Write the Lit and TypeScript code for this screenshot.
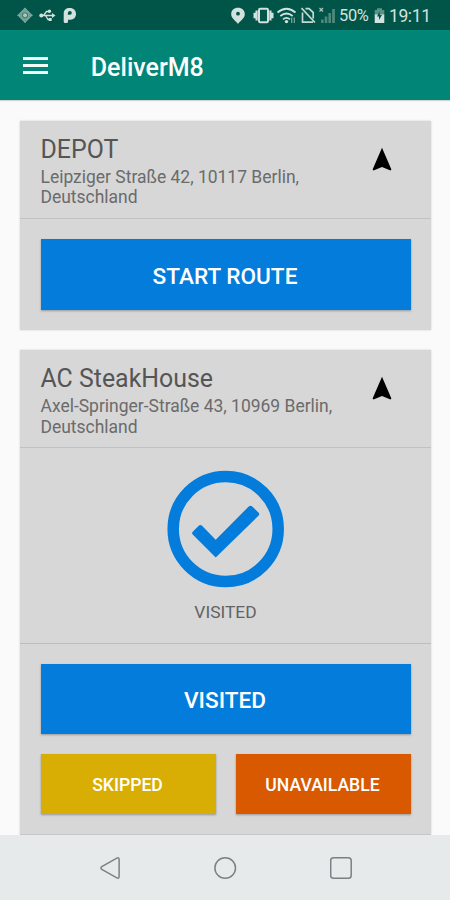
import { LitElement, html, css, svg } from "lit";
import { customElement, property } from "lit/decorators.js";

@customElement("status-bar")
class StatusBar extends LitElement {
  static styles = css`
    :host { display: flex; height: 30px; background: #005548; color: #d3e2df; }
    .icons { display: block; flex: none; }
    .fill { flex: 1; }
    .text { font-size: 16.4px; line-height: 32px; white-space: nowrap; }
    .battery { width: 33px; letter-spacing: -0.3px; }
    .clock { font-size: 17.500px; width: 61px; letter-spacing: -0.4px; }
  `;
  render() {
    return html`
      <svg class="icons" width="90" height="30" viewBox="0 0 90 30">
        <g fill="none" stroke="#7fa79e" stroke-width="1.3">
          <path d="M25 8.5 31.7 15.3 25 22 18.3 15.3Z" fill="#3b7d70" />
          <circle cx="25" cy="15.3" r="3.8" />
          <path d="M25 8v3.5M25 19v3.500M17.500 15.300H21M29 15.300H32.500" />
        </g>
        <circle cx="25" cy="15.3" r="2" fill="#a9c6bf" />
        <g fill="none" stroke="#d3e2df" stroke-width="1.3">
          <path d="M41 15.500H53M43.500 15.500 46.500 11.500H49M45.500 15.500 48 19.500H50" />
        </g>
        <g fill="#d3e2df">
          <circle cx="41.3" cy="15.5" r="2" />
          <path d="M52 13 55.500 15.500 52 18Z" />
          <circle cx="49.4" cy="11.2" r="1.7" />
          <rect x="48.7" y="18" width="3" height="3" />
        </g>
        <path fill="#d3e2df" fill-rule="evenodd" d="M63.700 13.500C63.700 10 66 8 69.800 8 73.700 8 76 10.500 76 14 76 17.500 73.500 19.700 70.500 19.700H68V21.500Q68 23 66.500 23H65Q63.700 23 63.700 21.500ZM67.700 14.800H70A1.900 1.900 0 1 0 68 12.800Z" />
      </svg>
      <div class="fill"></div>
      <svg class="icons" width="109" height="30" viewBox="230 0 109 30">
        <path fill="#d3e2df" fill-rule="evenodd" d="M238 7.800C234 7.800 231.200 10.500 231.200 14.200 231.200 18.500 236 20.700 238 24 240 20.700 244.800 18.500 244.800 14.200 244.800 10.500 242 7.800 238 7.800ZM238 11.800A1.900 1.900 0 1 1 238 15.600 1.900 1.900 0 0 1 238 11.800Z" />
        <g fill="none" stroke="#d3e2df">
          <rect x="259" y="8.700" width="9" height="13.600" rx="1.200" stroke-width="2" />
          <path stroke-width="2.200" d="M256.600 10.500V20.500M254.600 12.800V18.200M270.400 10.500V20.500M272.400 12.800V18.200" />
          <path stroke-width="1.700" d="M277.500 12.500Q286.500 5 295.500 12.500M280.300 16Q286.500 11 292.700 16M283 19.300Q286.500 16.500 290 19.300" />
        </g>
        <circle cx="286.500" cy="21.600" r="1.700" fill="#d3e2df" />
        <path d="M291.700 17.500V23M294.300 17.500V23" stroke="#7fa79e" stroke-width="1.200" />
        <path d="M302.500 12.500V22.200H313M305.500 8.700H309L313.200 12.500V18.500M301.500 8.200 315 22.500" fill="none" stroke="#c3d7d3" stroke-width="1.700" />
        <path d="M319.500 8 323 11.500M323 8 319.500 11.500" stroke="#a9c6bf" stroke-width="1.200" />
        <g fill="#4d887d">
          <rect x="321" y="19.500" width="2.600" height="3.500" />
          <rect x="324.700" y="16.500" width="2.600" height="6.500" />
          <rect x="328.400" y="13" width="2.600" height="10" />
          <rect x="332.100" y="9" width="2.800" height="14" />
        </g>
      </svg>
      <div class="text battery">50%</div>
      <svg class="icons" width="17" height="30" viewBox="372 0 17 30">
        <path d="M377 8.200H382V10H384.300V15H374.700V10H377Z" fill="#5b9287" />
        <path d="M374.700 14.500H384.300V23H374.700Z" fill="#d3e2df" />
        <path d="M379.500 11.500 377 16.500H379V20L382 15H380Z" fill="#005548" />
      </svg>
      <div class="text clock">19:11</div>
    `;
  }
}

@customElement("app-bar")
class AppBar extends LitElement {
  static styles = css`
    :host { display: flex; align-items: center; height: 70px; background: #008577; color: #fff; box-shadow: 0 1px 1px rgba(0,0,0,.15); }
    .menu { display: grid; gap: 4px; width: 24.500px; margin: 0 43px 0 23.300px; padding-top: 1px; }
    .line { height: 2.800px; background: #f2faf8; }
    .title { font-size: 25px; font-weight: 500; line-height: 30px; padding-top: 5px; }
  `;
  render() {
    return html`
      <div class="menu"><div class="line"></div><div class="line"></div><div class="line"></div></div>
      <div class="title">DeliverM8</div>
    `;
  }
}

@customElement("stop-header")
class StopHeader extends LitElement {
  static styles = css`
    :host { display: flex; box-sizing: border-box; height: 98px; padding: 13px 39px 0 20.500px; justify-content: space-between; border-bottom: 1px solid #c1c1c1; }
    .name { font-size: 24.900px; line-height: 30px; padding-top: 1px; color: #555; white-space: nowrap; }
    .address { width: 300px; font-size: 17.480px; line-height: 20.500px; color: #6b6b6b; padding-top: 2px; white-space: pre-line; }
    .arrow { display: block; margin-top: 13px; }
  `;
  @property() name = "";
  @property() address = "";
  render() {
    return html`
      <div>
        <div class="name">${this.name}</div>
        <div class="address">${this.address}</div>
      </div>
      <svg class="arrow" width="20" height="25" viewBox="0 0 20 25"><path d="M10 .7 19.400 22.500 18.500 23.500 10 20 1.500 23.500.600 22.500Z" fill="#000" /></svg>
    `;
  }
}

@customElement("nav-bar")
class NavBar extends LitElement {
  static styles = css`
    :host { display: flex; justify-content: center; gap: 93px; height: 65px; box-sizing: border-box; padding: 21px 0 0 1px; background: #e6eaeb; }
    .key { display: block; width: 22.500px; height: 24px; }
  `;
  render() {
    const shape = (s: unknown) => html`<svg class="key" viewBox="0 0 22.500 24" fill="none" stroke="#7c8082" stroke-width="1.500">${s}</svg>`;
    return html`
      ${shape(svg`<path d="M18.300 1.900 2.800 10.600Q1 12 2.800 13.400L18.300 22.100Q20.100 22.600 20.100 20.500V3.500Q20.100 1.400 18.300 1.900Z" />`)}
      ${shape(svg`<circle cx="11.200" cy="12" r="10.300" />`)}
      ${shape(svg`<rect x=".700" y="1.700" width="20.500" height="20.600" rx="2.800" />`)}
    `;
  }
}

@customElement("app-root")
class AppRoot extends LitElement {
  static styles = css`
    :host { display: flex; flex-direction: column; height: 900px; width: 450px; overflow: hidden; background: #fafafa; font-family: Roboto, sans-serif; }
    .list { flex: 1; min-height: 0; overflow: hidden; display: flex; flex-direction: column; gap: 20px; padding: 20.500px 19px 0 20px; }
    .card { flex: none; background: #d7d7d7; box-shadow: 0 0 2px rgba(0,0,0,.18); }
    .depot { height: 209.500px; }
    .stop { height: 484.500px; box-sizing: border-box; border-bottom: 1px solid #c5c8c9; }
    .status { box-sizing: border-box; height: 195.500px; border-bottom: 1px solid #bdbdbd; display: flex; flex-direction: column; align-items: center; padding-top: 22px; }
    .check { display: block; }
    .label { font-size: 17.400px; line-height: 20px; margin-top: 14px; color: #626262; }
    .actions { display: grid; grid-template-columns: 1fr 1fr; gap: 20px; padding: 20.500px 20.500px 0; }
    .button { display: grid; place-items: center; box-sizing: border-box; padding-right: 1px; color: #fff; font-weight: 500; box-shadow: 0 1px 2px rgba(0,0,0,.3); }
    .main { grid-column: 1 / -1; height: 70px; background: #037cdb; font-size: 22.600px; padding-top: 3px; }
    .depot .main { height: 71px; padding-top: 4px; }
    .small { height: 60px; font-size: 17.600px; padding-top: 2px; }
    .skip { background: #d8ae04; }
    .gone { background: #d95900; }
  `;
  render() {
    return html`
      <status-bar></status-bar>
      <app-bar></app-bar>
      <div class="list">
        <div class="card depot">
          <stop-header name="DEPOT" .address=${"Leipziger Straße 42, 10117 Berlin,\nDeutschland"}></stop-header>
          <div class="actions"><div class="button main">START ROUTE</div></div>
        </div>
        <div class="card stop">
          <stop-header name="AC SteakHouse" .address=${"Axel-Springer-Straße 43, 10969 Berlin,\nDeutschland"}></stop-header>
          <div class="status">
            <svg class="check" width="118" height="118" viewBox="0 0 118 118">
              <circle cx="58.700" cy="59" r="52.500" fill="none" stroke="#037cdb" stroke-width="11.500" />
              <path d="M48.700 87.500 25.700 64.500Q24.500 63 25.700 61.700L32 55.500Q33.500 54.300 34.800 55.500L48.700 69.700 82 36.200Q83.500 35.200 85 36.200L91.700 42.700Q92.800 44.200 91.700 45.500Z" fill="#037cdb" />
            </svg>
            <div class="label">VISITED</div>
          </div>
          <div class="actions">
            <div class="button main">VISITED</div>
            <div class="button small skip">SKIPPED</div>
            <div class="button small gone">UNAVAILABLE</div>
          </div>
        </div>
      </div>
      <nav-bar></nav-bar>
    `;
  }
}
